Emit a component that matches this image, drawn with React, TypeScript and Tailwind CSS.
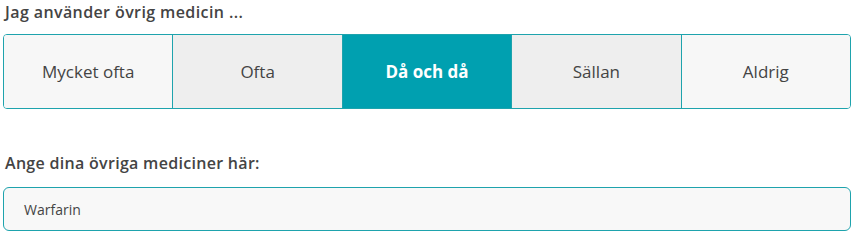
const options = ["Mycket ofta", "Ofta", "Då och då", "Sällan", "Aldrig"];
const selected = "Då och då";

export default function App() {
  return (
    <div
      className="w-[861px] h-[240px] bg-white px-[3px] pt-[1px] text-[#444]"
      style={{ fontFamily: "'Open Sans', 'Noto Sans', sans-serif" }}
    >
      <h2 className="pl-[2px] text-[16px] font-semibold leading-[22px] tracking-[0.4px]">
        Jag använder övrig medicin ...
      </h2>

      <div className="mt-[11px] flex h-[75px] w-[848px] overflow-hidden rounded-[4px] border border-[#1ea3ad]">
        {options.map((opt, i) => {
          const isSelected = opt === selected;
          const bg = isSelected
            ? "bg-[#00a0b0] text-white font-bold"
            : i % 2 === 0
              ? "bg-[#f7f7f7]"
              : "bg-[#eeeeee]";
          return (
            <button
              key={opt}
              className={`flex flex-1 items-center justify-center text-[17px] ${bg} ${
                i > 0 ? "border-l border-[#1ea3ad]" : ""
              }`}
            >
              {opt}
            </button>
          );
        })}
      </div>

      <label className="mt-[43px] block pl-[2px] text-[16px] font-semibold leading-[22px] tracking-[0.3px]">
        Ange dina övriga mediciner här:
      </label>
      <div className="mt-[13px] flex h-[44px] w-[848px] items-center rounded-[6px] border border-[#1ea3ad] bg-[#f8f8f8] pl-[20px] text-[14px]">
        Warfarin
      </div>
    </div>
  );
}
